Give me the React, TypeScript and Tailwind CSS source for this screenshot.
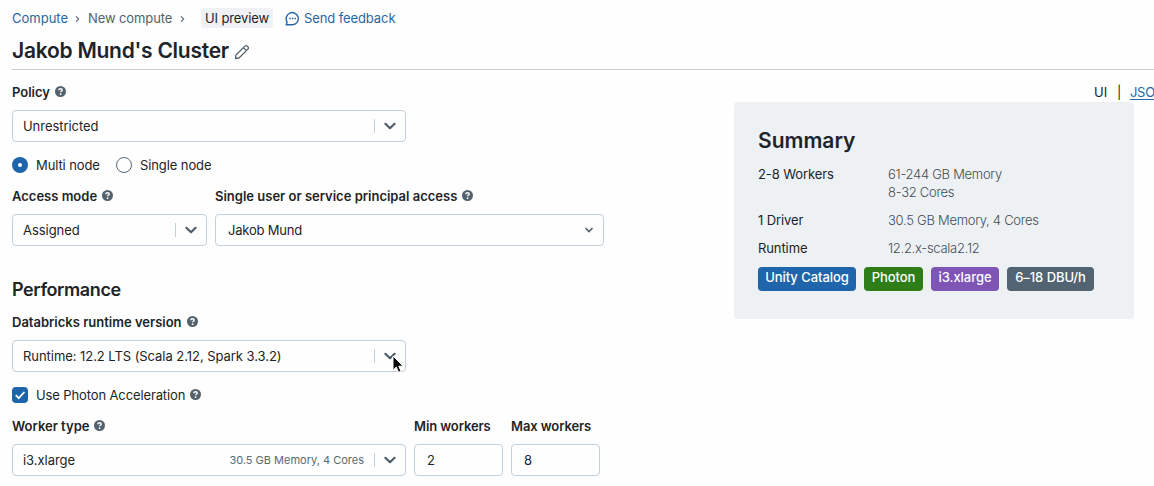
import type { ReactNode } from "react";
import clsx from "clsx";

function HelpIcon() {
  return (
    <svg viewBox="0 0 12 12" className="mb-0.5 h-[11px] w-[11px] shrink-0">
      <circle cx="6" cy="6" r="6" fill="#54626d" />
      <path
        d="M4.1 4.6c.1-1 .8-1.6 1.9-1.6s1.85.6 1.85 1.55c0 1.15-1.7 1.2-1.7 2.4"
        fill="none"
        stroke="#fff"
        strokeWidth="1.6"
      />
      <circle cx="6.1" cy="8.9" r=".95" fill="#fff" />
    </svg>
  );
}

function Chevron({ small }: { small?: boolean }) {
  return small ? (
    <svg viewBox="0 0 10 8" className="h-2 w-2.5 shrink-0">
      <path d="M1.5 2 5 5.5 8.5 2" fill="none" stroke="#505d68" strokeWidth="1.6" />
    </svg>
  ) : (
    <svg viewBox="0 0 12 8" className="h-2 w-3 shrink-0">
      <path
        d="m1.4 1.8 4.6 4.4 4.6-4.4"
        fill="none"
        stroke="#505d68"
        strokeWidth="2.2"
        strokeLinecap="round"
        strokeLinejoin="round"
      />
    </svg>
  );
}

function Label({ children, help }: { children: ReactNode; help?: boolean }) {
  return (
    <div className="flex h-[18px] items-center gap-[5px] font-semibold whitespace-nowrap">
      <span>{children}</span>
      {help && <HelpIcon />}
    </div>
  );
}

function Select({
  value,
  hint,
  className,
  children,
}: {
  value: string;
  hint?: string;
  className?: string;
  children?: ReactNode;
}) {
  return (
    <div
      className={clsx(
        "relative flex h-8 items-center rounded-[4px] border border-[#c3d0dd] pr-[9px] pl-2.5",
        className
      )}
    >
      <span className="flex-1 tracking-[-0.05px] whitespace-nowrap">{value}</span>
      {hint && (
        <span className="mr-2.5 text-[11px] whitespace-nowrap text-[#5b6872]">{hint}</span>
      )}
      <span className="mr-[9px] h-3.5 w-px bg-[#c6d0da]" />
      <Chevron />
      {children}
    </div>
  );
}

function Field({ value, className }: { value: string; className?: string }) {
  return (
    <div
      className={clsx(
        "flex h-8 items-center rounded-[4px] border border-[#c3d0dd] px-3",
        className
      )}
    >
      {value}
    </div>
  );
}

function Cursor() {
  return (
    <svg viewBox="0 0 12 19" className="absolute top-3.5 left-[379px] h-[19px] w-3">
      <path
        d="M1 1v14.2l3.3-3.1 2.2 5.2 2.5-1.1-2.2-5h4.4z"
        fill="#080808"
        stroke="#fff"
        strokeWidth="1"
      />
    </svg>
  );
}

const summary = [
  { name: "2-8 Workers", lines: ["61-244 GB Memory", "8-32 Cores"] },
  { name: "1 Driver", lines: ["30.5 GB Memory, 4 Cores"] },
  { name: "Runtime", lines: ["12.2.x-scala2.12"] },
];

const tags = [
  { text: "Unity Catalog", className: "w-[98px] bg-[#1f65ab]" },
  { text: "Photon", className: "w-[59px] bg-[#2e7d17]" },
  { text: "i3.xlarge", className: "w-[68px] bg-[#7e55b5]" },
  { text: "6–18 DBU/h", className: "w-[87px] bg-[#526371]" },
];

export default function App() {
  return (
    <div className="h-[486px] w-full overflow-hidden bg-[#fdfefd] pl-3 font-['Inter',sans-serif] text-[13px] leading-[18px] text-[#1d2429]">
      <header className="border-b border-[#cbcbcb]">
        <nav className="flex h-9 items-center whitespace-nowrap">
          <span className="w-[63px] text-[#2767a5]">Compute</span>
          <svg viewBox="0 0 5 8" className="mt-0.5 mr-2 h-2 w-[5px]">
            <path d="m1 1.3 2.7 2.7L1 6.7" fill="none" stroke="#5b6872" strokeWidth="1.1" />
          </svg>
          <span className="w-[92px] tracking-[-0.1px] text-[#54616b]">New compute</span>
          <svg viewBox="0 0 5 8" className="mt-0.5 h-2 w-[5px]">
            <path d="m1 1.3 2.7 2.7L1 6.7" fill="none" stroke="#5b6872" strokeWidth="1.1" />
          </svg>
          <span className="ml-4 h-5 w-[72px] rounded-[3px] bg-[#f0f1f4] text-center leading-5 tracking-[-0.1px]">
            UI preview
          </span>
          <svg viewBox="0 0 16 16" className="mr-1 ml-3 h-[15px] w-[15px]">
            <path
              d="M2.3 11.8A6.5 6.5 0 1 1 8 14.7H1.3z"
              fill="none"
              stroke="#2767a5"
              strokeWidth="1.5"
              strokeLinejoin="round"
            />
            <path d="M4.5 8h1.6M7.3 8h1.6M10.1 8h1.6" stroke="#2767a5" strokeWidth="1.5" />
          </svg>
          <span className="tracking-[-0.1px] text-[#2767a5]">Send feedback</span>
        </nav>
        <div className="flex h-[33px] items-start gap-[5px]">
          <h1 className="text-[21px] leading-[30px] font-semibold tracking-[-0.25px] whitespace-nowrap">
            Jakob Mund's Cluster
          </h1>
          <svg viewBox="0 0 16 16" className="mt-2 h-4 w-4">
            <path
              d="M1.5 14.5 2 11 10.9 2.1a1.6 1.6 0 0 1 2.3 0l.7.7a1.6 1.6 0 0 1 0 2.3L5 14zM9.4 3.6l3 3"
              fill="none"
              stroke="#54616b"
              strokeWidth="1.3"
              strokeLinejoin="round"
            />
          </svg>
        </div>
      </header>

      <main className="flex">
        <section className="w-[722px] shrink-0 pt-[13px]">
          <Label help>Policy</Label>
          <Select value="Unrestricted" className="mt-[9px] w-[394px]" />

          <div className="mt-3.5 flex h-[18px] items-center tracking-[-0.1px]">
            <span className="flex h-4 w-4 items-center justify-center rounded-full bg-[#1f65ab]">
              <span className="h-1 w-1 rounded-full bg-white" />
            </span>
            <span className="ml-2 w-20">Multi node</span>
            <span className="h-4 w-4 rounded-full border border-[#5b6872]" />
            <span className="ml-2">Single node</span>
          </div>

          <div className="mt-[13px] flex gap-2">
            <div className="w-[195px]">
              <Label help>Access mode</Label>
              <Select value="Assigned" className="mt-[9px]" />
            </div>
            <div className="w-[389px]">
              <Label help>Single user or service principal access</Label>
              <div className="mt-[9px] flex h-8 items-center justify-between rounded-[4px] border border-[#c3d0dd] pr-[9px] pl-3 tracking-[-0.2px]">
                <span>Jakob Mund</span>
                <Chevron small />
              </div>
            </div>
          </div>

          <h2 className="mt-8 text-lg leading-6 font-semibold tracking-[-0.4px]">Performance</h2>
          <div className="mt-[11px]">
            <Label help>Databricks runtime version</Label>
          </div>
          <Select
            value="Runtime: 12.2 LTS (Scala 2.12, Spark 3.3.2)"
            className="mt-[9px] w-[394px]"
          >
            <Cursor />
          </Select>

          <div className="mt-3.5 flex h-[18px] items-center">
            <span className="mr-2 flex h-4 w-4 items-center justify-center rounded-[4px] bg-[#1f65ab]">
              <svg viewBox="0 0 12 12" className="h-3 w-3">
                <path d="m1.8 6.2 2.9 2.9L10.4 3" fill="none" stroke="#fff" strokeWidth="1.8" />
              </svg>
            </span>
            <span className="mr-[5px] tracking-[-0.12px]">Use Photon Acceleration</span>
            <HelpIcon />
          </div>

          <div className="mt-[13px] flex gap-2">
            <div className="w-[394px]">
              <Label help>Worker type</Label>
              <Select value="i3.xlarge" hint="30.5 GB Memory, 4 Cores" className="mt-[9px]" />
            </div>
            <div className="w-[89px] tracking-[-0.1px]">
              <Label>Min workers</Label>
              <Field value="2" className="mt-[9px]" />
            </div>
            <div className="w-[89px] tracking-[-0.1px]">
              <Label>Max workers</Label>
              <Field value="8" className="mt-[9px]" />
            </div>
          </div>
        </section>

        <aside className="w-[420px] shrink-0 pt-[13px]">
          <div className="flex h-[19px] pl-[360px] whitespace-nowrap">
            <span className="w-[23px] shrink-0">UI</span>
            <span className="w-[13px] shrink-0">|</span>
            <a className="tracking-[-0.3px] text-[#2767a5] underline underline-offset-2">JSON</a>
          </div>
          <div className="h-[217px] w-[400px] rounded-[4px] bg-[#eef1f4] px-6 pt-[25px]">
            <h2 className="text-[21px] leading-7 font-semibold">Summary</h2>
            <div className="mt-2.5 flex flex-col gap-2.5">
              {summary.map((row) => (
                <div key={row.name} className="flex">
                  <span className="w-[130px] tracking-[-0.1px]">{row.name}</span>
                  <div className="font-light tracking-[-0.28px] text-[#454d54]">
                    {row.lines.map((line) => (
                      <div key={line}>{line}</div>
                    ))}
                  </div>
                </div>
              ))}
            </div>
            <div className="mt-2.5 flex gap-2">
              {tags.map((tag) => (
                <span
                  key={tag.text}
                  className={clsx(
                    "h-6 rounded-[4px] text-center leading-5 font-medium tracking-[-0.05px] whitespace-nowrap text-white",
                    tag.className
                  )}
                >
                  {tag.text}
                </span>
              ))}
            </div>
          </div>
        </aside>
      </main>
    </div>
  );
}
